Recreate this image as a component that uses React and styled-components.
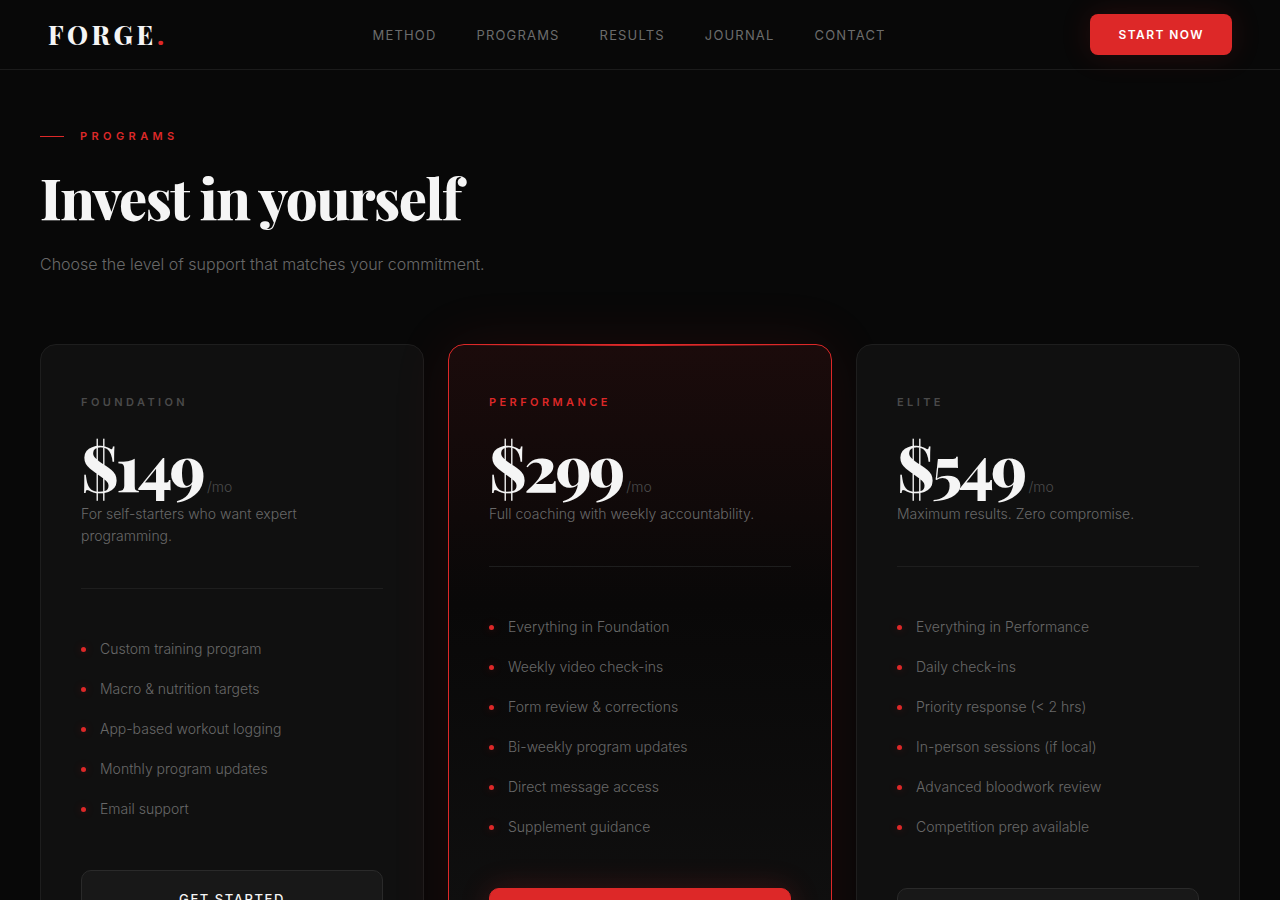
import React from "react";
import styled, { createGlobalStyle } from "styled-components";

const links = ["Method", "Programs", "Results", "Journal", "Contact"];

const plans = [
  {
    name: "Foundation",
    price: "$149",
    desc: "For self-starters who want expert programming.",
    features: [
      "Custom training program",
      "Macro & nutrition targets",
      "App-based workout logging",
      "Monthly program updates",
      "Email support",
    ],
  },
  {
    name: "Performance",
    price: "$299",
    desc: "Full coaching with weekly accountability.",
    featured: true,
    features: [
      "Everything in Foundation",
      "Weekly video check-ins",
      "Form review & corrections",
      "Bi-weekly program updates",
      "Direct message access",
      "Supplement guidance",
    ],
  },
  {
    name: "Elite",
    price: "$549",
    desc: "Maximum results. Zero compromise.",
    features: [
      "Everything in Performance",
      "Daily check-ins",
      "Priority response (< 2 hrs)",
      "In-person sessions (if local)",
      "Advanced bloodwork review",
      "Competition prep available",
    ],
  },
];

function App() {
  return (
    <>
      <GlobalStyle />
      <Nav>
        <Logo href="#">
          FORGE<span>.</span>
        </Logo>
        <NavLinks>
          {links.map((link) => (
            <li key={link}>
              <a href={`#${link.toLowerCase()}`}>{link}</a>
            </li>
          ))}
        </NavLinks>
        <StartButton>Start now</StartButton>
      </Nav>
      <Section id="programs">
        <Eyebrow>Programs</Eyebrow>
        <Title>Invest in yourself</Title>
        <Subtitle>
          Choose the level of support that matches your commitment.
        </Subtitle>
        <Plans>
          {plans.map((plan) => (
            <Card key={plan.name} $featured={plan.featured}>
              <PlanName $featured={plan.featured}>{plan.name}</PlanName>
              <Price>
                {plan.price}
                <span>/mo</span>
              </Price>
              <Description>{plan.desc}</Description>
              <Features>
                {plan.features.map((feature) => (
                  <Feature key={feature}>{feature}</Feature>
                ))}
              </Features>
              <PlanButton $featured={plan.featured}>Get started</PlanButton>
            </Card>
          ))}
        </Plans>
      </Section>
    </>
  );
}

export default App;

const serif = `"Playfair Display", "Liberation Serif", serif`;

const GlobalStyle = createGlobalStyle`
  * {
    box-sizing: border-box;
    margin: 0;
    padding: 0;
  }

  body {
    background: #080808;
    color: #f5f5f5;
    font-family: "Inter", sans-serif;
    -webkit-font-smoothing: antialiased;
  }

  button {
    font-family: inherit;
    cursor: pointer;
  }
`;

const Nav = styled.nav`
  display: flex;
  align-items: center;
  justify-content: space-between;
  padding: 14px 48px;
  border-bottom: 1px solid #1b1b1b;
`;

const Logo = styled.a`
  font-family: ${serif};
  font-size: 26px;
  font-weight: 800;
  line-height: 36px;
  letter-spacing: 0.14em;
  color: #f5f5f5;
  text-decoration: none;

  span {
    color: #dd2828;
  }
`;

const NavLinks = styled.ul`
  display: flex;
  gap: 40px;
  list-style: none;

  a {
    color: #6c6c6c;
    font-size: 13px;
    font-weight: 400;
    line-height: 20px;
    letter-spacing: 0.09em;
    text-transform: uppercase;
    text-decoration: none;
  }

  @media screen and (max-width: 900px) {
    display: none;
  }
`;

const StartButton = styled.button`
  padding: 13px 28px;
  border: none;
  border-radius: 8px;
  background: #dd2828;
  color: #fff;
  font-size: 12px;
  font-weight: 600;
  line-height: 15px;
  letter-spacing: 0.12em;
  text-transform: uppercase;
  box-shadow: 0 0 30px rgba(220, 38, 38, 0.15);
`;

const Section = styled.section`
  max-width: 1280px;
  margin: 0 auto;
  padding: 57px 40px 96px;
`;

const Eyebrow = styled.p`
  display: flex;
  align-items: center;
  gap: 16px;
  color: #dd2828;
  font-size: 11px;
  font-weight: 600;
  line-height: 18px;
  letter-spacing: 0.4em;
  text-transform: uppercase;

  &::before {
    content: "";
    width: 24px;
    height: 1px;
    background: #dd2828;
  }
`;

const Title = styled.h2`
  margin-top: 22px;
  font-family: ${serif};
  font-size: 56px;
  font-weight: 800;
  line-height: 60px;
  letter-spacing: -0.027em;
`;

const Subtitle = styled.p`
  margin-top: 24px;
  color: #686868;
  font-size: 16px;
  font-weight: 300;
  line-height: 26px;
`;

const Plans = styled.div`
  display: grid;
  grid-template-columns: repeat(3, 1fr);
  gap: 24px;
  margin-top: 67px;

  @media screen and (max-width: 900px) {
    grid-template-columns: 1fr;
  }
`;

const Card = styled.article`
  position: relative;
  display: flex;
  flex-direction: column;
  padding: 48px 40px;
  border: 1px solid ${(props) => (props.$featured ? "#dd2828" : "#1e1e1e")};
  border-radius: 16px;
  background: ${(props) =>
    props.$featured
      ? "linear-gradient(180deg, #1b0b0b 0%, #090808 40%, #111 100%)"
      : "#101010"};
  box-shadow: ${(props) =>
    props.$featured ? "0 0 60px rgba(220, 38, 38, 0.1)" : "none"};

  &::before {
    content: "";
    display: ${(props) => (props.$featured ? "block" : "none")};
    position: absolute;
    top: 0;
    left: 16px;
    right: 16px;
    height: 1px;
    background: linear-gradient(90deg, transparent, #dd2828, transparent);
  }
`;

const PlanName = styled.h3`
  color: ${(props) => (props.$featured ? "#dd2828" : "#4a4a4a")};
  font-size: 11px;
  font-weight: 600;
  line-height: 18px;
  letter-spacing: 0.31em;
  text-transform: uppercase;
`;

const Price = styled.p`
  margin: 23px 0 5px;
  font-family: ${serif};
  font-size: 64px;
  font-weight: 800;
  line-height: 64px;
  letter-spacing: -0.045em;

  span {
    margin-left: 4px;
    color: #4a4a4a;
    font-family: "Inter", sans-serif;
    font-size: 14px;
    font-weight: 300;
    line-height: 14px;
    letter-spacing: 0;
  }
`;

const Description = styled.p`
  padding-bottom: 41px;
  border-bottom: 1px solid #1e1e1e;
  color: #686868;
  font-size: 14px;
  font-weight: 300;
  line-height: 22px;
`;

const Features = styled.ul`
  margin: 40px 0 41px;
  list-style: none;
`;

const Feature = styled.li`
  display: flex;
  align-items: center;
  gap: 14px;
  padding: 8px 0;
  color: #686868;
  font-size: 14px;
  font-weight: 300;
  line-height: 24px;

  &::before {
    content: "";
    flex-shrink: 0;
    width: 5px;
    height: 5px;
    border-radius: 50%;
    background: #dd2828;
    box-shadow: 0 0 8px rgba(220, 38, 38, 0.3);
  }
`;

const PlanButton = styled.button`
  width: 100%;
  padding: 20px;
  border: 1px solid ${(props) => (props.$featured ? "#dd2828" : "#2a2a2a")};
  border-radius: 10px;
  background: ${(props) => (props.$featured ? "#dd2828" : "#181818")};
  color: #f5f5f5;
  font-size: 13px;
  font-weight: 500;
  line-height: 16px;
  letter-spacing: 0.12em;
  text-transform: uppercase;
  box-shadow: ${(props) =>
    props.$featured ? "0 0 30px rgba(220, 38, 38, 0.2)" : "none"};
`;
